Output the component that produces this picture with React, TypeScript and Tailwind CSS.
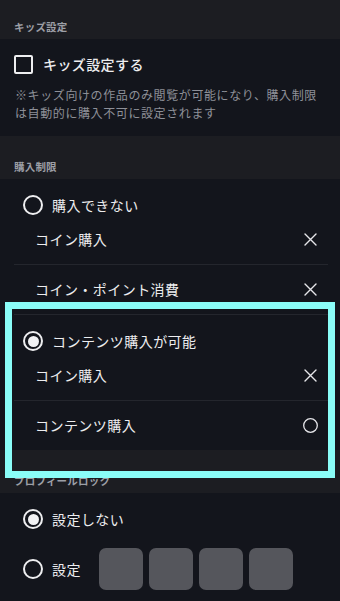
import React from "react";

const FONT = { fontFamily: '"Noto Sans CJK JP", "Noto Sans", sans-serif' };

function Band({ title, first }: { title: string; first?: boolean }) {
  return (
    <div
      className={`bg-[#1c1d22] px-[14px] pb-[4px] ${first ? "pt-[19px]" : "pt-[23px]"}`}
    >
      <div className="text-[10.5px] leading-[16px] tracking-[0.2px] font-bold text-[#9c9fa6]">
        {title}
      </div>
    </div>
  );
}

function Radio({ checked }: { checked?: boolean }) {
  return (
    <div className="w-[20px] h-[20px] rounded-full border-2 border-[#eeeef0] flex items-center justify-center shrink-0">
      {checked && <div className="w-[11px] h-[11px] rounded-full bg-[#f2f2f4]" />}
    </div>
  );
}

function RadioRow({ label, checked }: { label: string; checked?: boolean }) {
  return (
    <div className="flex items-center h-[20px] pl-[23px]">
      <Radio checked={checked} />
      <span className="ml-[9px] text-[14px] tracking-[0.45px] font-normal text-[#ededef]">
        {label}
      </span>
    </div>
  );
}

function Cross() {
  return (
    <svg width="15" height="15" viewBox="0 0 15 15" fill="none">
      <path d="M2 2 L13 13 M13 2 L2 13" stroke="#e6e6ea" strokeWidth="1.4" strokeLinecap="round" />
    </svg>
  );
}

function Circle() {
  return (
    <svg width="15" height="15" viewBox="0 0 15 15" fill="none">
      <circle cx="7.5" cy="7.5" r="6.8" stroke="#e6e6ea" strokeWidth="1.3" />
    </svg>
  );
}

function SubRow({ label, ok }: { label: string; ok?: boolean }) {
  return (
    <div className="h-[49px] flex items-center justify-between pl-[21px] pr-[10px]">
      <span className="text-[14px] tracking-[0.45px] font-normal text-[#ededef]">{label}</span>
      {ok ? <Circle /> : <Cross />}
    </div>
  );
}

export default function App() {
  return (
    <div className="relative w-[340px] h-[601px] overflow-hidden bg-[#13151c]" style={FONT}>
      <Band title="キッズ設定" first />
      <div className="bg-[#13151c] px-[14px] pt-[15px] pb-[14px]">
        <div className="flex items-center h-[20px]">
          <div className="w-[19px] h-[19px] border-2 border-[#eeeef0] rounded-[2px]" />
          <span className="ml-[10px] text-[14px] tracking-[0.4px] font-medium text-[#ededef]">
            キッズ設定する
          </span>
        </div>
        <p className="mt-[12px] text-[12px] leading-[18px] tracking-[0.6px] text-[#8e9098] pl-px">
          ※キッズ向けの作品のみ閲覧が可能になり、購入制限は自動的に購入不可に設定されます
        </p>
      </div>

      <Band title="購入制限" />
      <div className="bg-[#13151c]">
        <div className="pt-[16px] ml-[14px] mr-[12px] border-b border-[#24262d]">
          <div className="-ml-[14px]">
            <RadioRow label="購入できない" />
          </div>
          <SubRow label="コイン購入" />
          <div className="h-px bg-[#24262d]" />
          <SubRow label="コイン・ポイント消費" />
        </div>
        <div className="pt-[16px] ml-[14px] mr-[12px]">
          <div className="-ml-[14px]">
            <RadioRow label="コンテンツ購入が可能" checked />
          </div>
          <SubRow label="コイン購入" />
          <div className="h-px bg-[#24262d]" />
          <SubRow label="コンテンツ購入" ok />
        </div>
      </div>

      <Band title="プロフィールロック" />
      <div className="bg-[#13151c] pt-[16px]">
        <RadioRow label="設定しない" checked />
        <div className="flex items-center h-[42px] mt-[19px] pl-[23px]">
          <Radio />
          <span className="ml-[9px] text-[14px] tracking-[0.45px] font-normal text-[#ededef]">
            設定
          </span>
          <div className="flex gap-[6px] ml-[18px]">
            <div className="w-[44px] h-[42px] rounded-[7px] bg-[#55565c]" />
            <div className="w-[44px] h-[42px] rounded-[7px] bg-[#55565c]" />
            <div className="w-[44px] h-[42px] rounded-[7px] bg-[#55565c]" />
            <div className="w-[44px] h-[42px] rounded-[7px] bg-[#55565c]" />
          </div>
        </div>
      </div>

      <div className="absolute left-[5px] top-[302px] w-[330px] h-[176px] border-[7px] border-[#8afdf8] pointer-events-none" />
    </div>
  );
}
